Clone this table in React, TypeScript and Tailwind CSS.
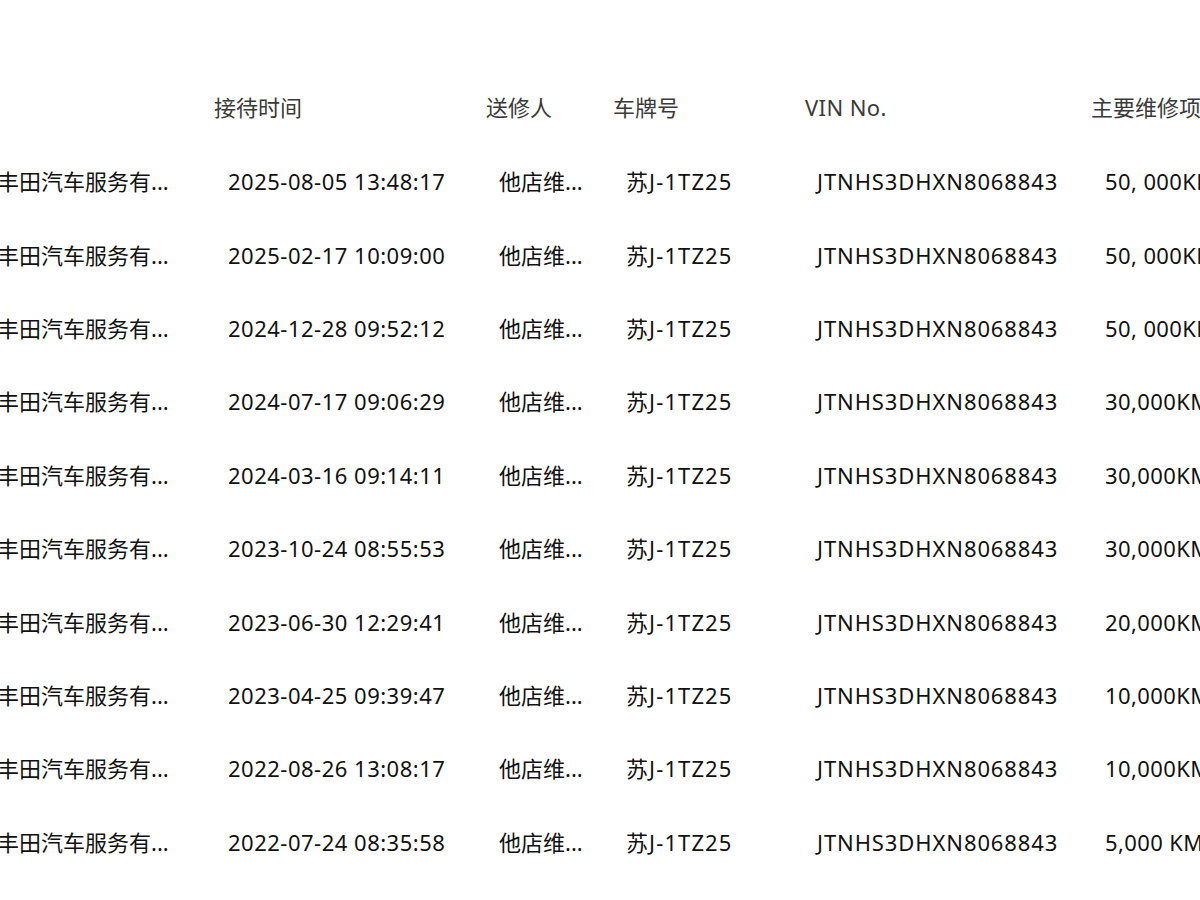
const rows = [
  { date: '2025-08-05 13:48:17', km: '50, 000KM保养' },
  { date: '2025-02-17 10:09:00', km: '50, 000KM保养' },
  { date: '2024-12-28 09:52:12', km: '50, 000KM保养' },
  { date: '2024-07-17 09:06:29', km: '30,000KM保养' },
  { date: '2024-03-16 09:14:11', km: '30,000KM保养' },
  { date: '2023-10-24 08:55:53', km: '30,000KM保养' },
  { date: '2023-06-30 12:29:41', km: '20,000KM保养' },
  { date: '2023-04-25 09:39:47', km: '10,000KM保养' },
  { date: '2022-08-26 13:08:17', km: '10,000KM保养' },
  { date: '2022-07-24 08:35:58', km: '5,000 KM保养' },
];

const cols = 'grid grid-cols-[214px_272px_127px_192px_286px_1fr]';

export default function App() {
  return (
    <div
      className="min-h-[900px] w-[1200px] overflow-hidden bg-white pt-[70px] text-[22px] text-[#111]"
      style={{ fontFamily: '"Noto Sans", "Noto Sans CJK SC", sans-serif' }}
    >
      <div className={`${cols} h-[75px] items-center whitespace-nowrap text-[#3a3a3a]`}>
        <div />
        <div>接待时间</div>
        <div>送修人</div>
        <div>车牌号</div>
        <div className="tracking-[0.4px]">VIN No.</div>
        <div className="overflow-hidden">主要维修项目</div>
      </div>
      {rows.map((r) => (
        <div key={r.date} className={`${cols} h-[73.4px] items-center whitespace-nowrap`}>
          <div className="-ml-[3px]">丰田汽车服务有...</div>
          <div className="pl-[14px] tracking-[0.5px]">{r.date}</div>
          <div className="pl-[13px]">他店维...</div>
          <div className="pl-[13px] tracking-[1.1px]">苏J-1TZ25</div>
          <div className="pl-[12px] tracking-[0.9px]">JTNHS3DHXN8068843</div>
          <div className="overflow-hidden pl-[14px] tracking-[0.4px]">{r.km}</div>
        </div>
      ))}
    </div>
  );
}
